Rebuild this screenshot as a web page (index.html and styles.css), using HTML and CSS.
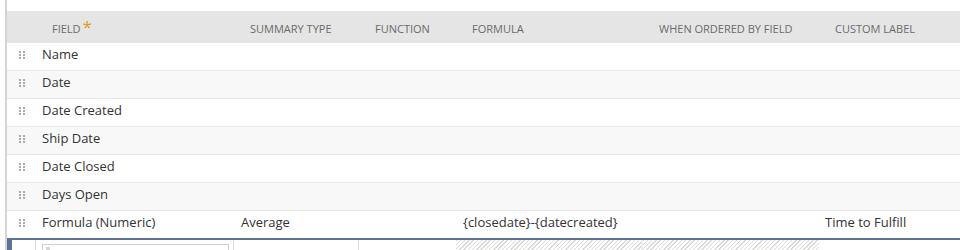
FILE: index.html
```html
<!DOCTYPE html>
<html>
<head>
<meta charset="utf-8">
<link rel="stylesheet" href="styles.css">
</head>
<body>
<div class="frame">
  <div class="table">
    <div class="row head">
      <div class="c"></div>
      <div class="c">FIELD<span class="req">*</span></div>
      <div class="c">SUMMARY TYPE</div>
      <div class="c">FUNCTION</div>
      <div class="c">FORMULA</div>
      <div class="c">WHEN ORDERED BY FIELD</div>
      <div class="c">CUSTOM LABEL</div>
    </div>
    <div class="row data">
      <div class="c drag"><span class="dots"></span></div>
      <div class="c">Name</div><div class="c"></div><div class="c"></div><div class="c"></div><div class="c"></div><div class="c"></div>
    </div>
    <div class="row data alt">
      <div class="c drag"><span class="dots"></span></div>
      <div class="c">Date</div><div class="c"></div><div class="c"></div><div class="c"></div><div class="c"></div><div class="c"></div>
    </div>
    <div class="row data">
      <div class="c drag"><span class="dots"></span></div>
      <div class="c">Date Created</div><div class="c"></div><div class="c"></div><div class="c"></div><div class="c"></div><div class="c"></div>
    </div>
    <div class="row data alt">
      <div class="c drag"><span class="dots"></span></div>
      <div class="c">Ship Date</div><div class="c"></div><div class="c"></div><div class="c"></div><div class="c"></div><div class="c"></div>
    </div>
    <div class="row data">
      <div class="c drag"><span class="dots"></span></div>
      <div class="c">Date Closed</div><div class="c"></div><div class="c"></div><div class="c"></div><div class="c"></div><div class="c"></div>
    </div>
    <div class="row data alt">
      <div class="c drag"><span class="dots"></span></div>
      <div class="c">Days Open</div><div class="c"></div><div class="c"></div><div class="c"></div><div class="c"></div><div class="c"></div>
    </div>
    <div class="row data last">
      <div class="c drag"><span class="dots"></span></div>
      <div class="c">Formula (Numeric)</div>
      <div class="c">Average</div>
      <div class="c"></div>
      <div class="c">{closedate}-{datecreated}</div>
      <div class="c"></div>
      <div class="c">Time to Fulfill</div>
    </div>
    <div class="row edit">
      <div class="c mark"><span class="stripe"></span></div>
      <div class="c sep"><div class="input"><span class="caret"></span></div></div>
      <div class="c sep"></div>
      <div class="c"></div>
      <div class="c hatch sep2"></div>
      <div class="c hatch"></div>
      <div class="c"></div>
    </div>
  </div>
</div>
</body>
</html>
```

FILE: styles.css
```css
html, body {
  margin: 0;
  padding: 0;
  background: #ffffff;
  height: 250px;
  overflow: hidden;
}

body {
  font-family: "Open Sans", "Liberation Sans", sans-serif;
  color: #333333;
}

.frame {
  margin-left: 5px;
  border-left: 2px solid #d4d4d4;
  height: 250px;
  padding-top: 11px;
  box-sizing: border-box;
}

.row {
  display: grid;
  grid-template-columns: 29px 198px 125px 97px 187px 176px 1fr;
}

.head {
  background: #e5e5e5;
  height: 32px;
  font-size: 11px;
  line-height: 15px;
  color: #6b6b6b;
}

.head .c {
  padding: 10px 0 0 16px;
  white-space: nowrap;
}

.head .c:first-child {
  padding: 0;
}

.req {
  color: #e39a1a;
  font-size: 17px;
  position: relative;
  top: 0px;
  margin-left: 2px;
  line-height: 10px;
}

.data {
  height: 27px;
  border-bottom: 1px solid #e6e6e6;
  font-size: 13px;
  line-height: 22px;
  background: #ffffff;
}

.data.alt {
  background: #f8f8f8;
}

.data.last {
  border-bottom: 2px solid #5f7198;
}

.data .c {
  padding-left: 6px;
  white-space: nowrap;
}

.data .c:nth-child(3),
.data .c:nth-child(5) {
  padding-left: 7px;
}

.data .c.drag {
  padding-left: 12px;
}

.dots {
  display: block;
  margin-top: 8px;
  width: 2px;
  height: 2px;
  background: #ababab;
  box-shadow: 4px 0 #ababab, 0 3px #ababab, 4px 3px #ababab, 0 6px #ababab, 4px 6px #ababab;
}

.edit {
  height: 11px;
}

.edit .c {
  position: relative;
  height: 11px;
}

.mark {
  display: flex;
  border-right: 1px solid #dcdcdc;
  box-sizing: border-box;
}

.stripe {
  width: 5px;
  background: #5f7198;
}

.sep {
  border-right: 1px solid #dcdcdc;
}

.input {
  margin: 4px 0 0 6px;
  width: 187px;
  height: 10px;
  border: 1px solid #cfcfcf;
  border-bottom: none;
  box-sizing: border-box;
}

.caret {
  display: block;
  margin: 2px 0 0 3px;
  width: 4px;
  height: 8px;
  background: #d6d6d6;
}

.hatch {
  background: repeating-linear-gradient(135deg, #d9d9d9 0 1px, #ffffff 1px 3px);
}

.sep2 {
  border-right: 2px solid #eeeeee;
  box-sizing: border-box;
}
```
